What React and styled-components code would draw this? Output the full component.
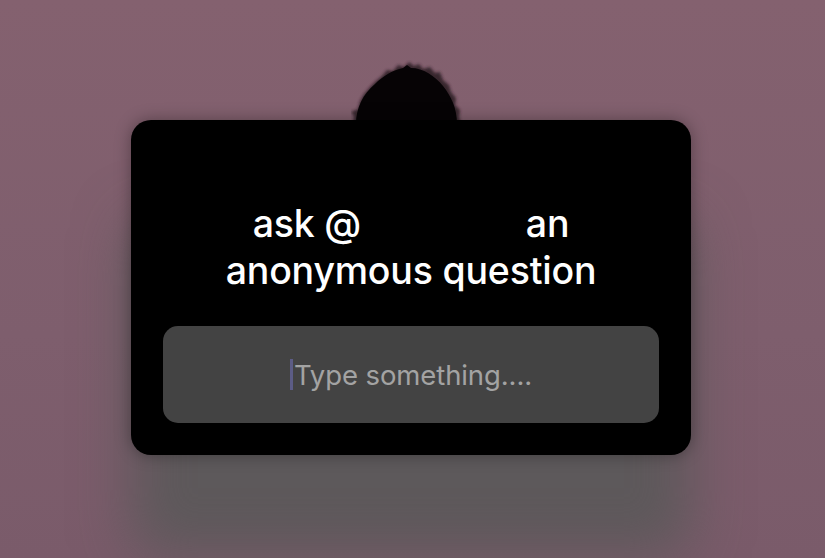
import React from "react";
import styled, { createGlobalStyle } from "styled-components";

const Global = createGlobalStyle`
  html, body {
    margin: 0;
    padding: 0;
    background: #7f5e6e;
  }
  body {
    font-family: Inter, "Noto Sans", "Liberation Sans", sans-serif;
  }
`;

const Page = styled.div`
  min-height: 558px;
  display: flex;
  justify-content: center;
  padding-top: 120px;
  box-sizing: border-box;
  background: linear-gradient(180deg, #84616f 0%, #7e5e6d 60%, #7a5b6a 100%);
  overflow: hidden;
`;

const Stage = styled.div`
  position: relative;
  width: 560px;
  margin-left: -3px;
`;

const Head = styled.svg`
  position: absolute;
  top: -60px;
  left: 220px;
  width: 112px;
  height: 64px;
`;

const Card = styled.div`
  position: relative;
  z-index: 1;
  width: 560px;
  height: 335px;
  box-sizing: border-box;
  padding: 80px 32px 32px;
  background: #000;
  border-radius: 20px;
  display: flex;
  flex-direction: column;
  justify-content: space-between;
  box-shadow: 0 0 16px rgba(0, 0, 0, 0.35),
    0 100px 55px rgba(88, 88, 88, 0.85);
`;

const Title = styled.h1`
  margin: 0;
  color: #fff;
  font-size: 37.5px;
  font-weight: 500;
  line-height: 47px;
  text-align: center;
  letter-spacing: -0.2px;
`;

const Redacted = styled.span`
  display: inline-block;
  width: 155px;
  height: 1px;
`;

const Field = styled.div`
  height: 97px;
  border-radius: 15px;
  background: #434343;
  display: flex;
  align-items: center;
  justify-content: center;
`;

const Caret = styled.span`
  display: inline-block;
  width: 3px;
  height: 31px;
  margin-right: 1px;
  background: #5c5c86;
`;

const Placeholder = styled.span`
  color: #a3a3a3;
  font-size: 27.5px;
  font-weight: 400;
  letter-spacing: -0.1px;
`;

export default function App() {
  return (
    <>
      <Global />
      <Page>
        <Stage>
          <Head viewBox="0 0 112 64">
            <defs>
              <filter id="fuzz" x="-20%" y="-20%" width="140%" height="140%">
                <feGaussianBlur stdDeviation="1.4" />
              </filter>
            </defs>
            <path
              d="M2 64 L3 56 L0 52 L7 49 L9 41 L13 34 L19 27 L25 21 L31 16 L36 10 L42 11 L47 5 L53 7 L58 2 L63 6 L68 4 L72 9 L79 7 L84 13 L89 12 L92 20 L98 25 L100 32 L105 38 L104 45 L109 50 L108 57 L110 64 Z"
              fill="#2c1c24"
              filter="url(#fuzz)"
              opacity="0.85"
            />
            <path
              d="M5 64 C5 48 12 34 24 24 C32 16 42 10 52 8 L56 5 L60 8 C72 8 84 16 92 26 C100 36 106 48 106 64 Z"
              fill="#060305"
            />
          </Head>
          <Card>
            <Title>
              ask @<Redacted /> an
              <br />
              anonymous question
            </Title>
            <Field>
              <Caret />
              <Placeholder>Type something....</Placeholder>
            </Field>
          </Card>
        </Stage>
      </Page>
    </>
  );
}
